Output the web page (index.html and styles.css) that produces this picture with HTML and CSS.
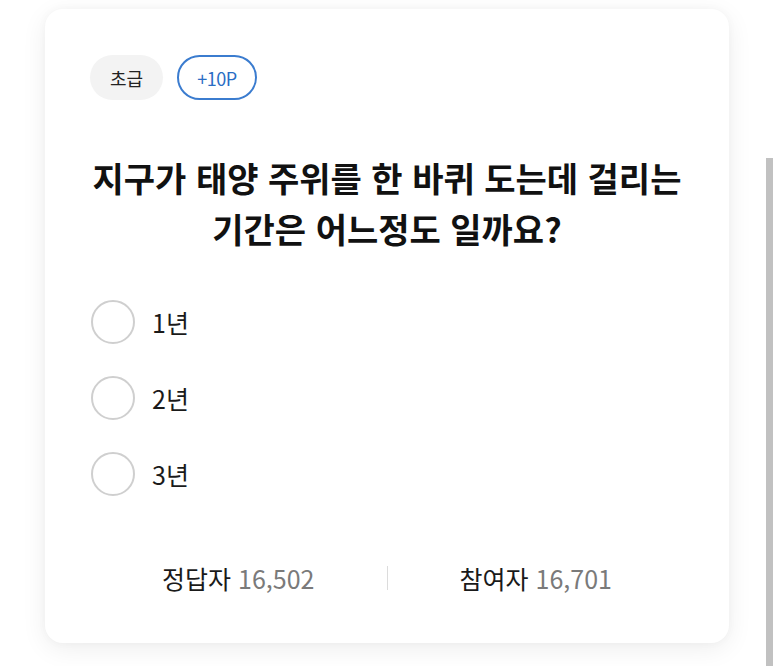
FILE: index.html
```html
<!DOCTYPE html>
<html lang="ko">
<head>
<meta charset="utf-8">
<link rel="stylesheet" href="styles.css">
</head>
<body>
<div class="card">
  <div class="tags">
    <span class="tag tag-level">초급</span>
    <span class="tag tag-point">+10P</span>
  </div>
  <h1 class="question">지구가 태양 주위를 한 바퀴 도는데 걸리는<br>기간은 어느정도 일까요?</h1>
  <ul class="options">
    <li class="option"><span class="radio"></span><span class="label">1년</span></li>
    <li class="option"><span class="radio"></span><span class="label">2년</span></li>
    <li class="option"><span class="radio"></span><span class="label">3년</span></li>
  </ul>
  <div class="stats">
    <div class="stat"><span class="stat-name">정답자</span> <span class="stat-num">16,502</span></div>
    <div class="divider"></div>
    <div class="stat"><span class="stat-name">참여자</span> <span class="stat-num">16,701</span></div>
  </div>
</div>
<div class="scroll-thumb"></div>
</body>
</html>
```
FILE: styles.css
```css
html, body {
  margin: 0;
  padding: 0;
  background: #ffffff;
  height: 100%;
  overflow: hidden;
}
body {
  font-family: "Noto Sans CJK KR", "Noto Sans", sans-serif;
  color: #111;
}
.card {
  box-sizing: border-box;
  margin: 9px 0 0 45px;
  width: 684px;
  height: 634px;
  background: #fff;
  border-radius: 18px;
  box-shadow: 0 6px 26px rgba(0, 0, 0, 0.07), 0 0 10px rgba(0, 0, 0, 0.03);
  padding: 46px 45px 0 45px;
  display: flex;
  flex-direction: column;
}
.tags {
  display: flex;
  gap: 14px;
}
.tag {
  box-sizing: border-box;
  height: 45px;
  border-radius: 23px;
  display: flex;
  align-items: center;
  justify-content: center;
  font-size: 18px;
}
.tag-level {
  width: 73px;
  background: #f3f3f3;
  color: #222;
}
.tag-point {
  width: 80px;
  border: 2px solid #3b7ccf;
  color: #2a6dc4;
  letter-spacing: -0.5px;
}
.question {
  margin: 52px 0 0 0;
  text-align: center;
  font-size: 34px;
  line-height: 51px;
  font-weight: 700;
  color: #111;
}
.options {
  list-style: none;
  margin: 46px 0 0 0;
  padding: 0;
  display: flex;
  flex-direction: column;
  gap: 32px;
}
.option {
  display: flex;
  align-items: center;
  height: 44px;
}
.radio {
  box-sizing: border-box;
  width: 44px;
  height: 44px;
  border: 2px solid #cfcfcf;
  border-radius: 50%;
  margin-left: 1px;
}
.label {
  margin-left: 17px;
  font-size: 25px;
  color: #1a1a1a;
}
.stats {
  margin-top: 64px;
  display: flex;
  align-items: center;
}
.stat {
  flex: 1;
  text-align: center;
  font-size: 25px;
}
.stat-name {
  color: #1a1a1a;
}
.stat-num {
  color: #7a7a7a;
}
.divider {
  width: 1px;
  height: 24px;
  background: #dcdcdc;
}
.scroll-thumb {
  position: fixed;
  right: 0;
  top: 158px;
  bottom: 0;
  width: 7px;
  background: #c1c1c1;
}
```
